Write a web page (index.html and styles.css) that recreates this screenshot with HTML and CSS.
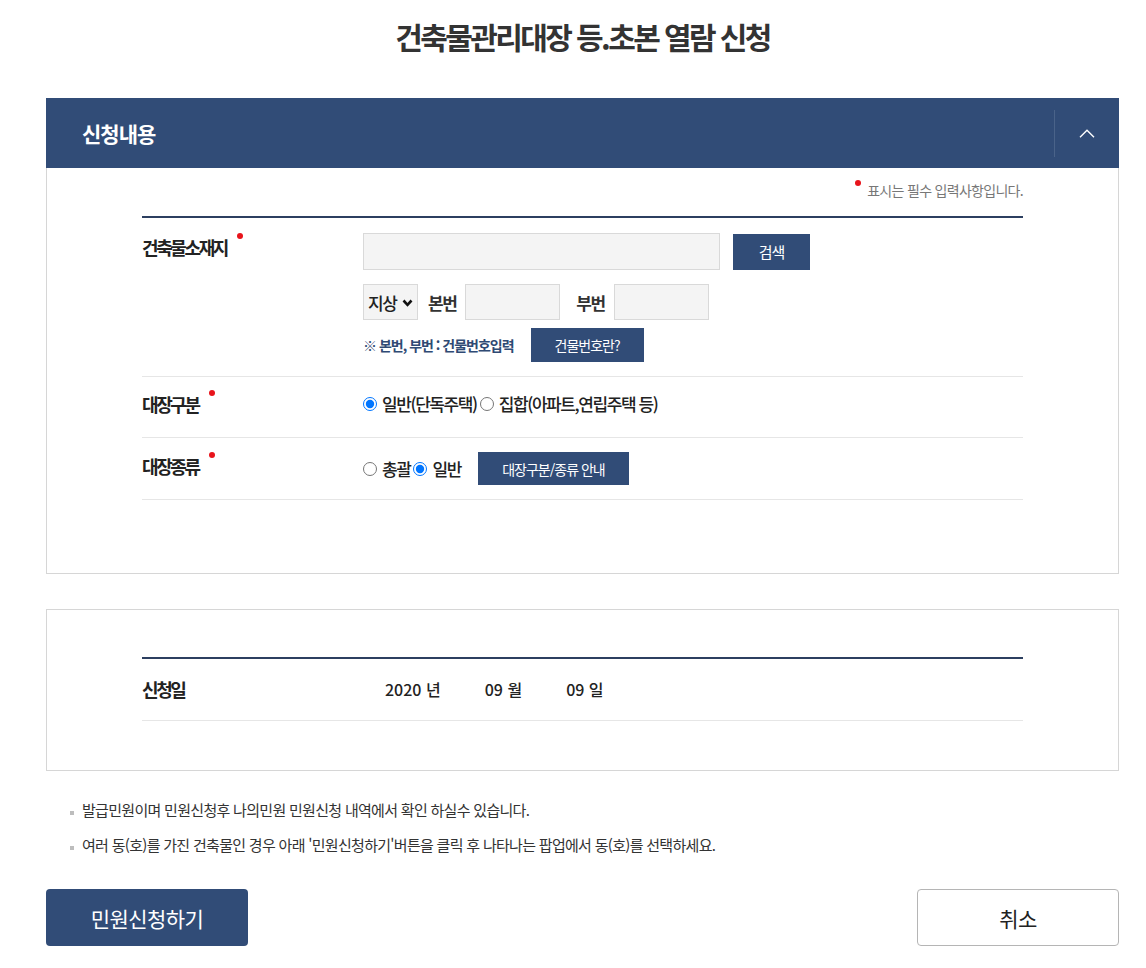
FILE: index.html
```html
<!DOCTYPE html>
<html lang="ko">
<head>
    <meta charset="UTF-8">
    <meta name="viewport" content="width=device-width, initial-scale=1.0">
    <title>건축물관리대장 등.초본 열람 신청</title>
    <link rel="stylesheet" href="styles.css">
</head>
<body>
    <div class="page">
        <h1 class="page-title">건축물관리대장 등.초본 열람 신청</h1>

        <div class="panel">
            <div class="panel-head">
                <h2>신청내용</h2>
                <button class="toggle" type="button">
                    <svg width="16" height="9" viewBox="0 0 16 9"><polyline points="1,8.2 8,1.2 15,8.2" fill="none" stroke="#fff" stroke-width="1.4"/></svg>
                </button>
            </div>
            <div class="panel-body">
                <p class="req-note"><span class="req"></span>표시는 필수 입력사항입니다.</p>

                <div class="form-table">
                    <div class="form-row row-addr">
                        <div class="label">건축물소재지<span class="req"></span></div>
                        <div class="field">
                            <div class="line">
                                <input type="text" class="inp inp-addr">
                                <button class="btn-navy btn-search" type="button">검색</button>
                            </div>
                            <div class="line">
                                <span class="sel-wrap">
                                    <select class="sel">
                                        <option>지상</option>
                                        <option>지하</option>
                                    </select>
                                    <svg class="sel-arrow" width="11" height="8" viewBox="0 0 11 8"><polyline points="1.5,1.5 5.5,5.8 9.5,1.5" fill="none" stroke="#111" stroke-width="2.6"/></svg>
                                </span>
                                <span class="inline-label">본번</span>
                                <input type="text" class="inp inp-num">
                                <span class="inline-label gap-l">부번</span>
                                <input type="text" class="inp inp-num">
                            </div>
                            <div class="line">
                                <span class="hint">※ 본번, 부번 : 건물번호입력</span>
                                <button class="btn-navy btn-help" type="button">건물번호란?</button>
                            </div>
                        </div>
                    </div>

                    <div class="form-row row-kind">
                        <div class="label">대장구분<span class="req"></span></div>
                        <div class="field radios">
                            <label><input type="radio" name="kind" checked>일반(단독주택)</label>
                            <label><input type="radio" name="kind">집합(아파트,연립주택 등)</label>
                        </div>
                    </div>

                    <div class="form-row row-type">
                        <div class="label">대장종류<span class="req"></span></div>
                        <div class="field radios">
                            <label><input type="radio" name="type">총괄</label>
                            <label><input type="radio" name="type" checked>일반</label>
                            <button class="btn-navy btn-guide" type="button">대장구분/종류 안내</button>
                        </div>
                    </div>
                </div>
            </div>
        </div>

        <div class="panel panel-date">
            <div class="form-table">
                <div class="form-row row-date">
                    <div class="label">신청일</div>
                    <div class="field date-val">
                        <span>2020 년</span>
                        <span>09 월</span>
                        <span>09 일</span>
                    </div>
                </div>
            </div>
        </div>

        <ul class="notes">
            <li>발급민원이며 민원신청후 나의민원 민원신청 내역에서 확인 하실수 있습니다.</li>
            <li>여러 동(호)를 가진 건축물인 경우 아래 '민원신청하기'버튼을 클릭 후 나타나는 팝업에서 동(호)를 선택하세요.</li>
        </ul>

        <div class="actions">
            <button class="btn-submit" type="button">민원신청하기</button>
            <button class="btn-cancel" type="button">취소</button>
        </div>
    </div>
</body>
</html>
```

FILE: styles.css
```css
* {
    margin: 0;
    padding: 0;
    box-sizing: border-box;
}

body {
    font-family: "Noto Sans CJK KR", "Noto Sans", sans-serif;
    color: #222;
    background: #fff;
}

.page {
    width: 1073px;
    margin-left: 46px;
}

.page-title {
    padding-top: 16px;
    margin-bottom: 42px;
    line-height: 40px;
    font-size: 30px;
    font-weight: 700;
    letter-spacing: -2.6px;
    color: #333;
    text-align: center;
}

/* panel */
.panel-head {
    display: flex;
    align-items: center;
    justify-content: space-between;
    height: 70px;
    background: #314c77;
}

.panel-head h2 {
    padding-left: 36px;
    font-size: 21px;
    font-weight: 700;
    letter-spacing: -1px;
    color: #fff;
}

.toggle {
    display: flex;
    align-items: center;
    justify-content: center;
    width: 65px;
    height: 47px;
    background: none;
    border: none;
    border-left: 1px solid #4a6389;
    cursor: pointer;
}

.panel-body {
    padding: 12px 95px 73px;
    border: 1px solid #d6d6d6;
    border-top: none;
}

.req-note {
    line-height: 20px;
    margin-bottom: 16px;
    font-size: 14px;
    letter-spacing: -0.7px;
    color: #777;
    text-align: right;
}

.req {
    display: inline-block;
    width: 6px;
    height: 6px;
    border-radius: 50%;
    background: #e8141b;
    vertical-align: top;
}

.req-note .req {
    margin: 0 6px 0 0;
}

.label .req {
    margin: 0 0 0 10px;
}

/* form table */
.form-table {
    border-top: 2px solid #2c3f60;
}

.form-row {
    display: grid;
    grid-template-columns: 221px 1fr;
    border-bottom: 1px solid #e6e6e6;
}

.label {
    line-height: 28px;
    font-size: 18px;
    font-weight: 700;
    letter-spacing: -2.4px;
    color: #222;
}

.row-addr {
    padding: 15px 0 14px;
}

.row-kind {
    padding: 13px 0 19px;
}

.row-type {
    padding: 14px 0 14px;
}

.line {
    display: flex;
    align-items: center;
}

.line + .line {
    margin-top: 14px;
}

.line:last-child {
    margin-top: 8px;
}

.inp {
    height: 37px;
    background: #f4f4f4;
    border: 1px solid #d9d9d9;
    font-family: inherit;
    font-size: 15px;
    outline: none;
}

.inp-addr {
    width: 357px;
}

.inp-num {
    width: 95px;
    height: 36px;
}

.sel-wrap {
    position: relative;
    display: inline-flex;
}

.sel {
    width: 55px;
    height: 36px;
    padding-left: 4px;
    appearance: none;
    -webkit-appearance: none;
    background: #f4f4f4;
    border: 1px solid #d9d9d9;
    border-radius: 0;
    font-family: inherit;
    font-size: 17px;
    font-weight: 500;
    letter-spacing: -1.4px;
    color: #222;
}

.sel-arrow {
    position: absolute;
    right: 5px;
    top: 15px;
    pointer-events: none;
}

.inline-label {
    margin: 0 9px 0 10px;
    font-size: 17px;
    font-weight: 700;
    letter-spacing: -1.5px;
    color: #333;
}

.inline-label.gap-l {
    margin-left: 16px;
}

.hint {
    font-size: 14px;
    font-weight: 700;
    letter-spacing: -1px;
    color: #2f4a74;
}

.btn-navy {
    background: #314c77;
    border: none;
    color: #fff;
    font-family: inherit;
    font-size: 15px;
    letter-spacing: -1px;
    cursor: pointer;
}

.btn-search {
    width: 77px;
    height: 36px;
    margin-left: 13px;
}

.btn-help {
    width: 113px;
    height: 34px;
    margin-left: 17px;
    font-size: 14px;
}

.btn-guide {
    width: 151px;
    height: 33px;
    margin-left: 17px;
    font-size: 14px;
}

/* radios */
.radios {
    display: flex;
    align-items: center;
    line-height: 24px;
    font-size: 17px;
    font-weight: 500;
    letter-spacing: -1.4px;
    color: #222;
}

.radios label {
    display: flex;
    align-items: center;
}

.radios input {
    width: 14px;
    height: 14px;
    margin: 0 5px 0 0;
}

.radios label + label {
    margin-left: 3px;
}

/* date panel */
.panel-date {
    margin-top: 35px;
    padding: 47px 95px 49px;
    border: 1px solid #d6d6d6;
}

.row-date {
    padding: 16px 0 17px;
}

.date-val {
    display: flex;
    gap: 44px;
    padding-left: 22px;
    line-height: 28px;
    font-size: 16px;
    font-weight: 500;
    color: #222;
}

/* notes */
.notes {
    list-style: none;
    margin-top: 27px;
}

.notes li {
    padding-left: 24px;
    line-height: 24px;
    font-size: 15px;
    letter-spacing: -0.7px;
    color: #333;
}

.notes li + li {
    margin-top: 11px;
}

.notes li::before {
    content: "";
    display: inline-block;
    width: 4px;
    height: 4px;
    margin-right: 8px;
    background: #bdbdbd;
    vertical-align: 1px;
}

/* actions */
.actions {
    display: flex;
    justify-content: space-between;
    margin-top: 32px;
}

.btn-submit,
.btn-cancel {
    width: 202px;
    height: 57px;
    border-radius: 4px;
    font-family: inherit;
    font-size: 21px;
    letter-spacing: -0.6px;
    cursor: pointer;
}

.btn-submit {
    background: #314c77;
    border: none;
    color: #fff;
}

.btn-cancel {
    background: #fff;
    border: 1px solid #b5b5b5;
    color: #222;
}
```
